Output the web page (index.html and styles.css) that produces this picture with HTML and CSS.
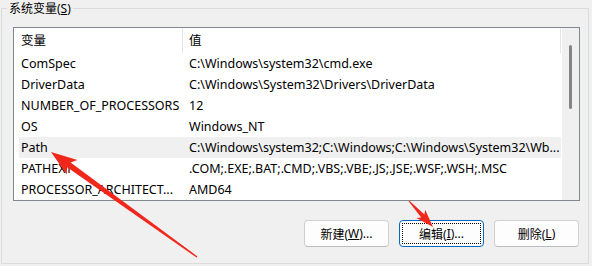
FILE: index.html
```html
<!DOCTYPE html>
<html lang="zh-CN">
<head>
<meta charset="utf-8">
<title>系统变量</title>
<link rel="stylesheet" href="styles.css">
</head>
<body>
<fieldset class="group">
  <legend class="group-title">系统变量(<u>S</u>)</legend>
  <div class="listbox">
    <div class="list-main">
      <div class="list-head">
        <div class="hcell hname">变量</div>
        <div class="hcell hvalue">值</div>
      </div>
      <div class="row"><span class="cname">ComSpec</span><span class="cvalue">C:\Windows\system32\cmd.exe</span></div>
      <div class="row"><span class="cname">DriverData</span><span class="cvalue">C:\Windows\System32\Drivers\DriverData</span></div>
      <div class="row"><span class="cname">NUMBER_OF_PROCESSORS</span><span class="cvalue">12</span></div>
      <div class="row"><span class="cname">OS</span><span class="cvalue">Windows_NT</span></div>
      <div class="row selected"><span class="cname">Path</span><span class="cvalue">C:\Windows\system32;C:\Windows;C:\Windows\System32\Wb...</span></div>
      <div class="row"><span class="cname">PATHEXT</span><span class="cvalue">.COM;.EXE;.BAT;.CMD;.VBS;.VBE;.JS;.JSE;.WSF;.WSH;.MSC</span></div>
      <div class="row"><span class="cname">PROCESSOR_ARCHITECT...</span><span class="cvalue">AMD64</span></div>
    </div>
    <div class="scrollbar"><div class="thumb"></div></div>
  </div>
  <div class="buttons">
    <button class="btn">新建(<u>W</u>)...</button>
    <button class="btn focused"><span class="focus-ring">编辑(<u>I</u>)...</span></button>
    <button class="btn">删除(<u>L</u>)</button>
  </div>
</fieldset>
<svg class="arrows" width="592" height="266" viewBox="0 0 592 266">
  <polygon fill="#f1271c" points="51,152 77.4,159.9 70.6,162.4 197.4,256.4 196.6,257.6 67.1,167.2 66.8,174.5"/>
  <polygon fill="#f1271c" points="433,227 416.4,217.9 421.2,217.5 408.6,201.3 409.4,200.7 424.4,214.5 425.2,209.7"/>
</svg>
</body>
</html>
```
FILE: styles.css
```css
html, body {
  margin: 0;
  padding: 0;
}
body {
  width: 592px;
  height: 266px;
  background: #f0f0f0;
  font-family: "Noto Sans", "Noto Sans CJK SC", sans-serif;
  font-size: 12px;
  color: #000;
  position: relative;
  overflow: hidden;
}
.group {
  box-sizing: border-box;
  margin: 0 3px 0 1px;
  padding: 0 9px 0 11px;
  border: 1px solid #dcdcdc;
  height: 264px;
  min-width: 0;
}
.group-title {
  padding: 0 2px;
  margin-left: -6px;
  line-height: 17px;
  font-size: 12px;
}
.listbox {
  box-sizing: border-box;
  margin-top: 10px;
  width: 567px;
  height: 174px;
  border: 1px solid #828790;
  background: #fff;
  display: flex;
  font-size: 12.5px;
}
.list-main {
  flex: 1;
  min-width: 0;
}
.list-head {
  display: flex;
  height: 25px;
  align-items: stretch;
}
.hcell {
  line-height: 25px;
  height: 25px;
  box-sizing: border-box;
}
.hname {
  width: 169px;
  padding-left: 7px;
  border-right: 1px solid #e5e5e5;
}
.hvalue {
  flex: 1;
  padding-left: 6px;
  border-right: 1px solid #e5e5e5;
  margin-right: 1px;
}
.row {
  display: flex;
  height: 21px;
  line-height: 21px;
  margin-left: 5px;
  margin-right: 1px;
  white-space: nowrap;
}
.row.selected {
  background: #f0f0f0;
}
.cname {
  width: 168px;
  padding-left: 2px;
  box-sizing: border-box;
  overflow: hidden;
}
.cvalue {
  flex: 1;
  padding-left: 2px;
  overflow: hidden;
}
.scrollbar {
  width: 17px;
  background: #f0f0f0;
}
.thumb {
  margin: 17px 0 0 7px;
  width: 3px;
  height: 64px;
  border-radius: 2px;
  background: #858585;
}
.buttons {
  display: flex;
  justify-content: flex-end;
  gap: 10px;
  margin-top: 19px;
  width: 566px;
}
.btn {
  box-sizing: border-box;
  width: 85px;
  height: 27px;
  border: 1px solid #d0d0d0;
  border-bottom-color: #bdbdbd;
  border-radius: 4px;
  background: #fdfdfd;
  font-family: "Noto Sans", "Noto Sans CJK SC", sans-serif;
  font-size: 12px;
  color: #000;
  padding: 0;
  display: flex;
  align-items: center;
  justify-content: center;
}
.btn.focused {
  border: 1px solid #0067c0;
  padding: 2px;
}
.focus-ring {
  flex: 1;
  align-self: stretch;
  display: flex;
  align-items: center;
  justify-content: center;
  border: 1px dotted #000;
}
.arrows {
  position: absolute;
  left: 0;
  top: 0;
  pointer-events: none;
}
```
